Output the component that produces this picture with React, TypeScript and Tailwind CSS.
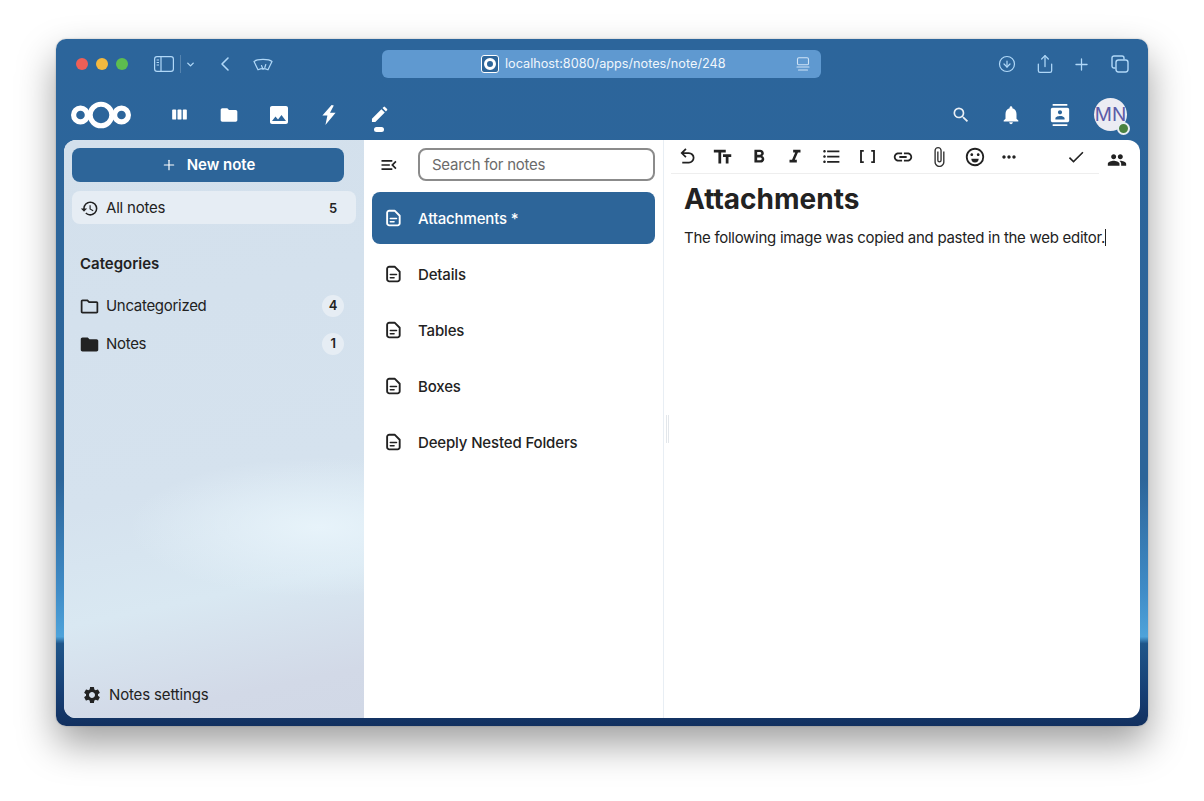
import React from "react";
import { MdHistory, MdFolder, MdOutlineFolder, MdSettings, MdSearch, MdNotifications, MdContacts, MdImage, MdFormatBold, MdFormatItalic, MdFormatListBulleted, MdLink, MdAttachFile, MdMoreHoriz, MdCheck, MdPeople, MdMenuOpen } from "react-icons/md";
import { Plus, ChevronDown, ChevronLeft, CircleArrowDown, Share } from "lucide-react";

function Doc({ className }: { className?: string }) {
  return (
    <svg viewBox="0 0 16 18" className={className} fill="none" stroke="currentColor" strokeWidth="2" strokeLinejoin="round">
      <path d="M3.4 1.2h5.8l5.4 5.4V14.6a2.2 2.2 0 0 1-2.2 2.2H3.4a2.2 2.2 0 0 1-2.2-2.2V3.4a2.2 2.2 0 0 1 2.2-2.2Z" />
      <path d="M4.6 9.6h6.6M4.6 13h4" strokeLinecap="round" strokeWidth="1.6" />
    </svg>
  );
}

function NoteRow({ title, active }: { title: string; active?: boolean }) {
  return (
    <div className={`flex h-[52px] w-[283px] items-center rounded-lg pl-[14px] ${active ? "bg-[#2d6599] text-white" : "text-[#222222]"}`}>
      <Doc className="h-[18px] w-[15px] shrink-0" />
      <span className="ml-[17px] pt-[2px] text-[15px] font-medium tracking-[-0.15px]">{title}</span>
    </div>
  );
}

function ToolButton({ children, className = "" }: { children: React.ReactNode; className?: string }) {
  return <div className={`flex h-9 w-9 shrink-0 items-center justify-center ${className}`}>{children}</div>;
}

function NavIcon({ children }: { children: React.ReactNode }) {
  return <div className="relative flex h-[50px] w-[50px] items-center justify-center text-white">{children}</div>;
}

export default function App() {
  return (
    <div className="h-[801px] w-[1204px] overflow-hidden bg-white pl-[56px] pt-[39px] font-['Inter','Noto_Sans',sans-serif] text-[#222222]">
      <div className="flex h-[687px] w-[1092px] flex-col rounded-[10px] bg-[linear-gradient(180deg,#2c659b_0%,#2d6599_64%,#3f8bc6_80%,#4ea3da_87%,#1f568a_88%,#173f74_95%,#12305f_100%)] shadow-[0_18px_38px_rgba(0,0,0,0.38),0_0_2px_rgba(0,0,0,0.25)]">
        {/* Browser title bar */}
        <div className="flex h-[50px] shrink-0 items-center text-[#b0d8f8]">
          <div className="ml-5 flex gap-2">
            <span className="h-3 w-3 rounded-full bg-[#ee5f57]" />
            <span className="h-3 w-3 rounded-full bg-[#f4b93f]" />
            <span className="h-3 w-3 rounded-full bg-[#5dbd4f]" />
          </div>
          <svg viewBox="0 0 20 16" className="ml-[26px] h-4 w-5" fill="none" stroke="currentColor" strokeWidth="1.2">
            <rect x="0.6" y="0.6" width="18.8" height="14.8" rx="2.4" />
            <path d="M7 1v14M2.6 4h2.4M2.6 6.5h2.4M2.6 9h2.4" />
          </svg>
          <div className="ml-[6px] h-[18px] w-px bg-[#5584b0]" />
          <ChevronDown className="ml-[4px] h-[11px] w-[11px]" strokeWidth={3} />
          <ChevronLeft className="ml-[17px] h-[24px] w-[24px]" strokeWidth={1.6} />
          <svg viewBox="0 0 20 14" className="ml-[16px] h-[14px] w-5" fill="none" stroke="currentColor" strokeWidth="1.2" strokeLinecap="round" strokeLinejoin="round">
            <path d="M1 4.5C4 1.6 16 1.6 19 4.5l-4 8.3C12 11.4 8 11.4 5 12.8L1 4.5Z" />
            <path d="M8.5 8.5l1.6 4M12.8 7.5l-1 3" />
          </svg>
          <div className="ml-[109px] flex h-7 w-[439px] items-center rounded-md bg-[#5f99d0] text-white">
            <div className="ml-[99px] flex h-[18px] w-[18px] items-center justify-center rounded-[3px] border border-white bg-[#2d6599]">
              <span className="h-[12px] w-[12px] rounded-full border-[3px] border-white" />
            </div>
            <span className="ml-[6px] w-[221px] whitespace-nowrap text-[12.7px] text-[#f0f6fc]">localhost:8080/apps/notes/note/248</span>
            <svg viewBox="0 0 14 14" className="ml-[70px] h-[14px] w-[14px] text-[#cfe3f6]" fill="none" stroke="currentColor" strokeWidth="1.1" strokeLinecap="round">
              <rect x="1.5" y="0.8" width="11" height="7" rx="1.4" />
              <path d="M1 10h12M2.5 13h9" />
            </svg>
          </div>
          <CircleArrowDown className="ml-[177px] h-[18px] w-[18px]" strokeWidth={1.6} />
          <Share className="ml-[19px] h-5 w-5" strokeWidth={1.5} />
          <Plus className="ml-[17px] h-[19px] w-[19px]" strokeWidth={1.6} />
          <svg viewBox="0 0 18 18" className="ml-[20px] h-[18px] w-[18px]" fill="none" stroke="currentColor" strokeWidth="1.4">
            <path d="M4.5 13H3a2 2 0 0 1-2-2V3a2 2 0 0 1 2-2h8a2 2 0 0 1 2 2v1.4" />
            <rect x="5" y="5" width="12" height="12" rx="2.4" />
          </svg>
        </div>

        {/* Nextcloud header */}
        <div className="flex h-[51px] shrink-0 items-center">
          <svg viewBox="0 0 60 30" className="ml-[15px] h-[30px] w-[60px]" fill="none" stroke="white">
            <circle cx="30" cy="15" r="10.8" strokeWidth="5" />
            <circle cx="9.5" cy="15" r="6.9" strokeWidth="5.2" />
            <circle cx="50.5" cy="15" r="6.9" strokeWidth="5.2" />
          </svg>
          <div className="ml-[23px] flex">
            <NavIcon>
              <svg viewBox="0 0 16 12" className="h-[11px] w-[15px]" fill="white">
                <rect x="0" y="0.5" width="4.4" height="11" rx="1" />
                <rect x="5.8" y="0.5" width="4.4" height="11" rx="1" />
                <rect x="11.6" y="0.5" width="4.4" height="11" rx="1" />
              </svg>
            </NavIcon>
            <NavIcon><MdFolder className="h-5 w-5" /></NavIcon>
            <NavIcon><MdImage className="h-[24px] w-[24px]" /></NavIcon>
            <NavIcon>
              <svg viewBox="0 0 14 20" className="h-[20px] w-[14px]" fill="white">
                <path d="M9.6 0 0.4 10.6h5L3.4 20 13.6 7.8H8L11.8 0.6Z" />
              </svg>
            </NavIcon>
            <NavIcon>
              <svg viewBox="0 0 18 18" className="mb-[1px] h-[17px] w-[17px]" fill="white">
                <path d="M1 17v-3.6L11 3.4 14.6 7 4.6 17H1ZM12.2 2.2l1.2-1.2a1 1 0 0 1 1.4 0l2.2 2.2a1 1 0 0 1 0 1.4L15.8 5.8 12.2 2.2Z" />
              </svg>
              <span className="absolute bottom-[8px] left-[20px] h-[5px] w-[10px] rounded-full bg-white" />
            </NavIcon>
          </div>
          <div className="ml-auto flex items-center text-white">
            <MdSearch className="mr-[29px] h-5 w-5 opacity-90" />
            <MdNotifications className="mr-[27px] h-[22px] w-[22px]" />
            <MdContacts className="mr-[23px] h-[22px] w-[22px]" />
            <div className="relative mr-[21px] flex h-[33px] w-[33px] items-center justify-center rounded-full bg-[#ececf3] pt-[1px] text-[19px] text-[#5c5ca8]">
              MN
              <span className="absolute bottom-[-4px] right-[-3px] h-[13px] w-[13px] rounded-full border-2 border-[#e8eef4] bg-[#4a8240]" />
            </div>
          </div>
        </div>

        {/* App content */}
        <div className="mx-2 mb-2 flex min-h-0 flex-1 overflow-hidden rounded-xl bg-white">
          {/* Sidebar */}
          <aside className="flex w-[300px] shrink-0 flex-col bg-[radial-gradient(ellipse_190px_70px_at_85%_67%,#e7f3fa,transparent),linear-gradient(168deg,#d3e0ec_0%,#d5e2ee_58%,#d9e8f2_76%,#d2d9e7_92%,#d1d8e6_100%)] pl-2 pt-2">
            <div className="flex h-[34px] w-[272px] items-center justify-center rounded-lg bg-[#2d6599] text-[15px] font-semibold text-white">
              <Plus className="mr-[10px] h-4 w-4" strokeWidth={1.8} />
              <span className="pt-[1px]">New note</span>
            </div>
            <div className="mt-[9px] flex h-[33px] w-[284px] items-center rounded-lg bg-[#e6edf4] pl-[8px] pt-[2px] text-[15px] tracking-[-0.2px]">
              <MdHistory className="h-[19px] w-[19px]" />
              <span className="ml-[7px]">All notes</span>
              <span className="ml-auto mr-[19px] text-[13px] font-semibold">5</span>
            </div>
            <div className="ml-2 mt-[31px] text-[15px] font-semibold leading-[18px]">Categories</div>
            <div className="mt-[22px] flex h-[22px] w-[272px] items-center pl-[7px] text-[15px] tracking-[-0.3px]">
              <MdOutlineFolder className="h-[21px] w-[21px]" />
              <span className="ml-[6px]">Uncategorized</span>
              <span className="ml-auto flex h-[22px] w-[22px] items-center justify-center rounded-full bg-[#e6edf4] text-[13px] font-semibold">4</span>
            </div>
            <div className="mt-4 flex h-[22px] w-[272px] items-center pl-[7px] text-[15px] tracking-[-0.3px]">
              <MdFolder className="h-[21px] w-[21px]" />
              <span className="ml-[6px]">Notes</span>
              <span className="ml-auto flex h-[22px] w-[22px] items-center justify-center rounded-full bg-[#e6edf4] text-[13px] font-semibold">1</span>
            </div>
            <div className="mb-[12px] ml-[10px] mt-auto flex items-center text-[15px] tracking-[-0.15px]">
              <MdSettings className="h-5 w-5" />
              <span className="ml-[7px]">Notes settings</span>
            </div>
          </aside>

          {/* Notes list */}
          <section className="w-[300px] shrink-0 border-r border-[#e8eef4] pl-2 pr-2 pt-2">
            <div className="flex h-[33px] items-center">
              <MdMenuOpen className="ml-[7px] h-[20px] w-[20px]" />
              <div className="ml-[19px] flex h-[33px] w-[237px] items-center rounded-lg border-2 border-[#8b8b8b] bg-white pl-3 pt-[2px] text-[15px] tracking-[-0.25px] text-[#6b6b6b]">
                Search for notes
              </div>
            </div>
            <div className="mt-[11px] flex flex-col gap-1">
              <NoteRow title="Attachments *" active />
              <NoteRow title="Details" />
              <NoteRow title="Tables" />
              <NoteRow title="Boxes" />
              <NoteRow title="Deeply Nested Folders" />
            </div>
          </section>

          {/* Editor */}
          <main className="relative min-w-0 flex-1">
            <span className="absolute left-[2px] top-[275px] h-[28px] w-[3px] border-x border-[#e3e7eb]" />
            <div className="flex items-start">
              <div className="ml-[7px] flex h-[34px] w-[428px] shrink-0 items-center border-b border-[#eeeeee] text-[#222222]">
                <div className="-ml-[2px] flex items-center">
                  <ToolButton>
                    <svg viewBox="0 0 24 24" className="h-[21px] w-[21px]" fill="currentColor">
                      <path d="M13.5 7a6.5 6.5 0 0 1 0 13H6v-2h7.5c2.5 0 4.5-2 4.5-4.5S16 9 13.5 9H7.83l3.08 3.09L9.5 13.5 4 8l5.5-5.5 1.42 1.41L7.83 7h5.67Z" />
                    </svg>
                  </ToolButton>
                  <ToolButton>
                    <svg viewBox="0 0 24 24" className="h-[22px] w-[22px]" fill="currentColor">
                      <path d="M2 4v3h5v12h3V7h5V4H2m19 5h-9v3h3v7h3v-7h3V9Z" />
                    </svg>
                  </ToolButton>
                  <ToolButton><MdFormatBold className="h-[22px] w-[22px]" /></ToolButton>
                  <ToolButton><MdFormatItalic className="h-[22px] w-[22px]" /></ToolButton>
                  <ToolButton><MdFormatListBulleted className="h-[21px] w-[21px]" /></ToolButton>
                  <ToolButton>
                    <svg viewBox="0 0 16 14" className="h-[13px] w-[15px]" fill="none" stroke="currentColor" strokeWidth="2"><path d="M4 1H1v12h3M12 1h3v12h-3" /></svg>
                  </ToolButton>
                  <ToolButton><MdLink className="h-[22px] w-[22px]" /></ToolButton>
                  <ToolButton><MdAttachFile className="h-[22px] w-[22px] text-[#333333]" /></ToolButton>
                  <ToolButton>
                    <svg viewBox="0 0 24 24" className="h-[22px] w-[22px]" fill="currentColor">
                      <path d="M12 2C6.47 2 2 6.47 2 12s4.47 10 10 10a10 10 0 0 0 10-10C22 6.47 17.5 2 12 2Zm0 18a8 8 0 1 1 0-16 8 8 0 0 1 0 16ZM7 9.5C7 8.7 7.7 8 8.5 8S10 8.7 10 9.5 9.3 11 8.5 11 7 10.3 7 9.5Zm7 0c0-.8.7-1.5 1.5-1.5s1.5.7 1.5 1.5-.7 1.5-1.5 1.5-1.5-.7-1.5-1.5ZM8 14h8a4 4 0 0 1-8 0Z" />
                    </svg>
                  </ToolButton>
                  <ToolButton className="-ml-[2px]"><MdMoreHoriz className="h-[20px] w-[20px]" /></ToolButton>
                  <ToolButton className="ml-[31px]"><MdCheck className="h-[20px] w-[20px]" /></ToolButton>
                </div>
              </div>
              <div className="flex h-9 flex-1 items-center pl-[8px] pt-[3px]"><MdPeople className="h-5 w-5" /></div>
            </div>
            <div className="pl-5">
              <h1 className="mt-[6px] text-[28px] font-bold leading-[34px] text-[#222222]">Attachments</h1>
              <p className="mt-[10px] text-[15px] leading-[24px] tracking-[-0.28px]">
                The following image was copied and pasted in the web editor.<span className="inline-block h-[17px] w-px translate-y-[3px] bg-[#222222]" />
              </p>
            </div>
          </main>
        </div>
      </div>
    </div>
  );
}
